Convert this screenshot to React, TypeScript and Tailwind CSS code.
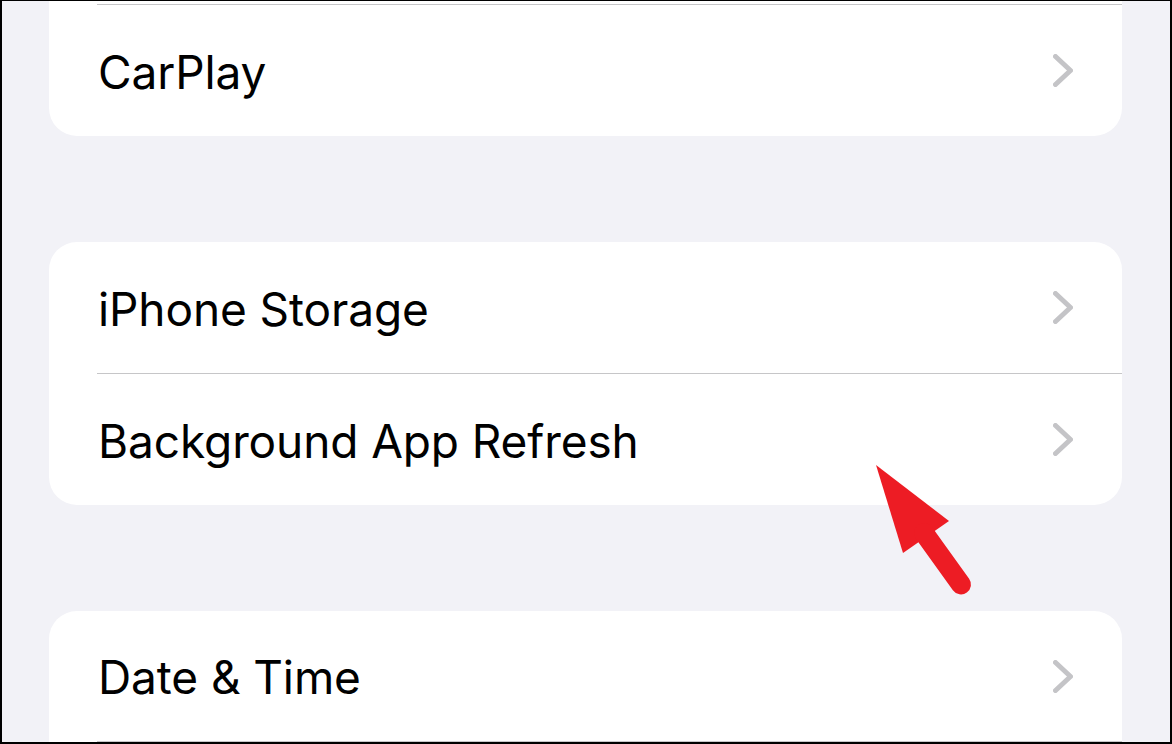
import React from "react";

function Chevron() {
  return (
    <svg width="20" height="33" viewBox="0 0 20 33" className="shrink-0">
      <polyline
        points="2.5,2.5 17.5,16.5 2.5,30.5"
        fill="none"
        stroke="#c4c4c7"
        strokeWidth="5"
        strokeLinecap="round"
        strokeLinejoin="round"
      />
    </svg>
  );
}

function Row({ label, h = "h-[131px]" }: { label: string; h?: string }) {
  return (
    <div className={`${h} flex items-center justify-between pl-[49px] pr-[49px]`}>
      <span className="text-[46px] leading-none text-black font-normal tracking-[-0.1px] mt-[2px]">{label}</span>
      <Chevron />
    </div>
  );
}

function Sep() {
  return <div className="h-px ml-[48px] bg-[#c6c6c8]" />;
}

export default function App() {
  return (
    <div
      className="relative w-[1172px] h-[744px] overflow-hidden bg-[#f2f2f7] border-black border-t border-l-2 border-r-2 border-b-2"
      style={{ fontFamily: "Inter, 'Liberation Sans', sans-serif" }}
    >
      <div className="flex flex-col pl-[47px]">
        <div className="w-[1073px] bg-white rounded-b-[28px] pt-[3px]">
          <Sep />
          <Row label="CarPlay" />
        </div>
        <div className="w-[1073px] bg-white rounded-[28px] mt-[106px]">
          <Row label="iPhone Storage" />
          <Sep />
          <Row label="Background App Refresh" />
        </div>
        <div className="w-[1073px] bg-white rounded-t-[28px] mt-[106px]">
          <Row label="Date & Time" h="h-[130px]" />
          <Sep />
          <div className="h-[131px]" />
        </div>
      </div>
      <svg
        className="absolute left-0 top-0 pointer-events-none"
        width="1172"
        height="744"
        viewBox="0 0 1172 744"
      >
        <polygon points="874,464 947,520 901,552" fill="#ed1c24" />
        <line
          x1="922"
          y1="532"
          x2="959"
          y2="583.5"
          stroke="#ed1c24"
          strokeWidth="20"
          strokeLinecap="round"
        />
      </svg>
    </div>
  );
}
